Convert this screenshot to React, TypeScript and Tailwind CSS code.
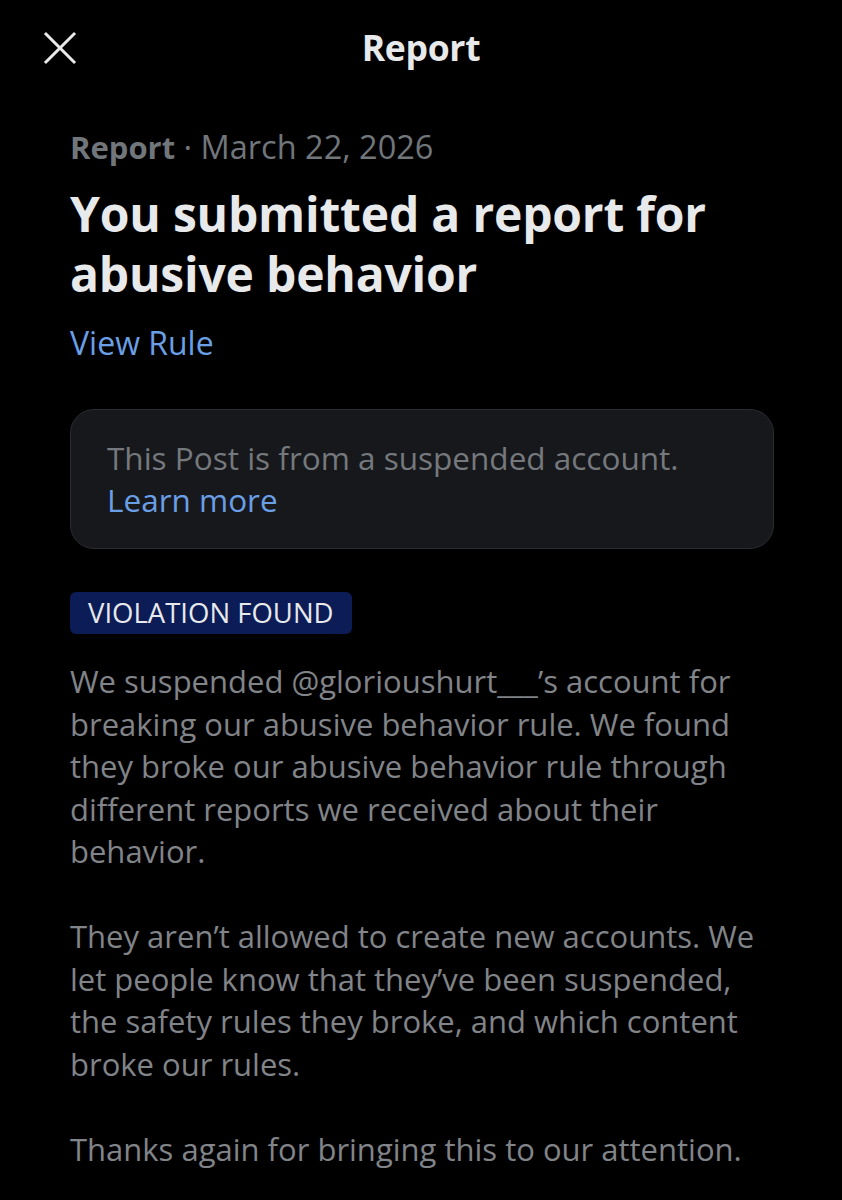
import React from 'react';

const ReportDetail = () => {
  return (
    <div className="min-h-[1200px] w-[842px] bg-black text-[#e7e9ea]" style={{ fontFamily: '"Open Sans", sans-serif' }}>
      {/* header */}
      <div className="relative flex h-[96px] items-center justify-center">
        <button className="absolute left-[42px] top-[30px] h-[36px] w-[36px] text-[#e7e9ea]" aria-label="Close">
          <svg viewBox="0 0 36 36" className="h-full w-full" fill="none" stroke="currentColor" strokeWidth="3" strokeLinecap="square">
            <path d="M4 4L32 32M32 4L4 32" />
          </svg>
        </button>
        <h1 className="text-[35.5px] font-bold tracking-[-0.3px]">Report</h1>
      </div>

      <div className="px-[70px]">
        <p className="mt-[30px] text-[32px] leading-[42px] text-[#71767b]">
          <span className="text-[31px] font-bold">Report</span>
          <span className="text-[32.5px]"> · March 22, 2026</span>
        </p>

        <h2 className="mt-[16px] text-[48px] font-bold leading-[60px] tracking-[-0.2px] text-[#e7e9ea]">
          You submitted a report for abusive behavior
        </h2>

        <a className="mt-[18px] block text-[32px] leading-[42px] text-[#6a9fe6]">View Rule</a>

        <div className="mt-[45px] w-[704px] rounded-[24px] border border-[#2a2c30] bg-[#17181c] px-[36px] py-[27px]">
          <p className="text-[31.5px] leading-[42px] text-[#75787c]">This Post is from a suspended account.</p>
          <a className="block text-[31.5px] leading-[42px] text-[#6a9fe6]">Learn more</a>
        </div>

        <div className="mt-[43px] inline-flex h-[42px] items-center rounded-[6px] bg-[#0b1c57] px-[18px]">
          <span className="text-[27.5px] uppercase text-[#e7e9ea]">Violation found</span>
        </div>

        <div className="mt-[26px] text-[31px] leading-[42.5px] text-[#818488]">
          <p>
            We suspended @glorioushurt___’s account for breaking our abusive behavior rule. We found they broke our abusive behavior rule through different reports we received about their behavior.
          </p>
          <p className="mt-[42.5px]">
            They aren’t allowed to create new accounts. We let people know that they’ve been suspended, the safety rules they broke, and which content broke our rules.
          </p>
          <p className="mt-[42.5px]">Thanks again for bringing this to our attention.</p>
        </div>
      </div>
    </div>
  );
};

export default function App() {
  return <ReportDetail />;
}
